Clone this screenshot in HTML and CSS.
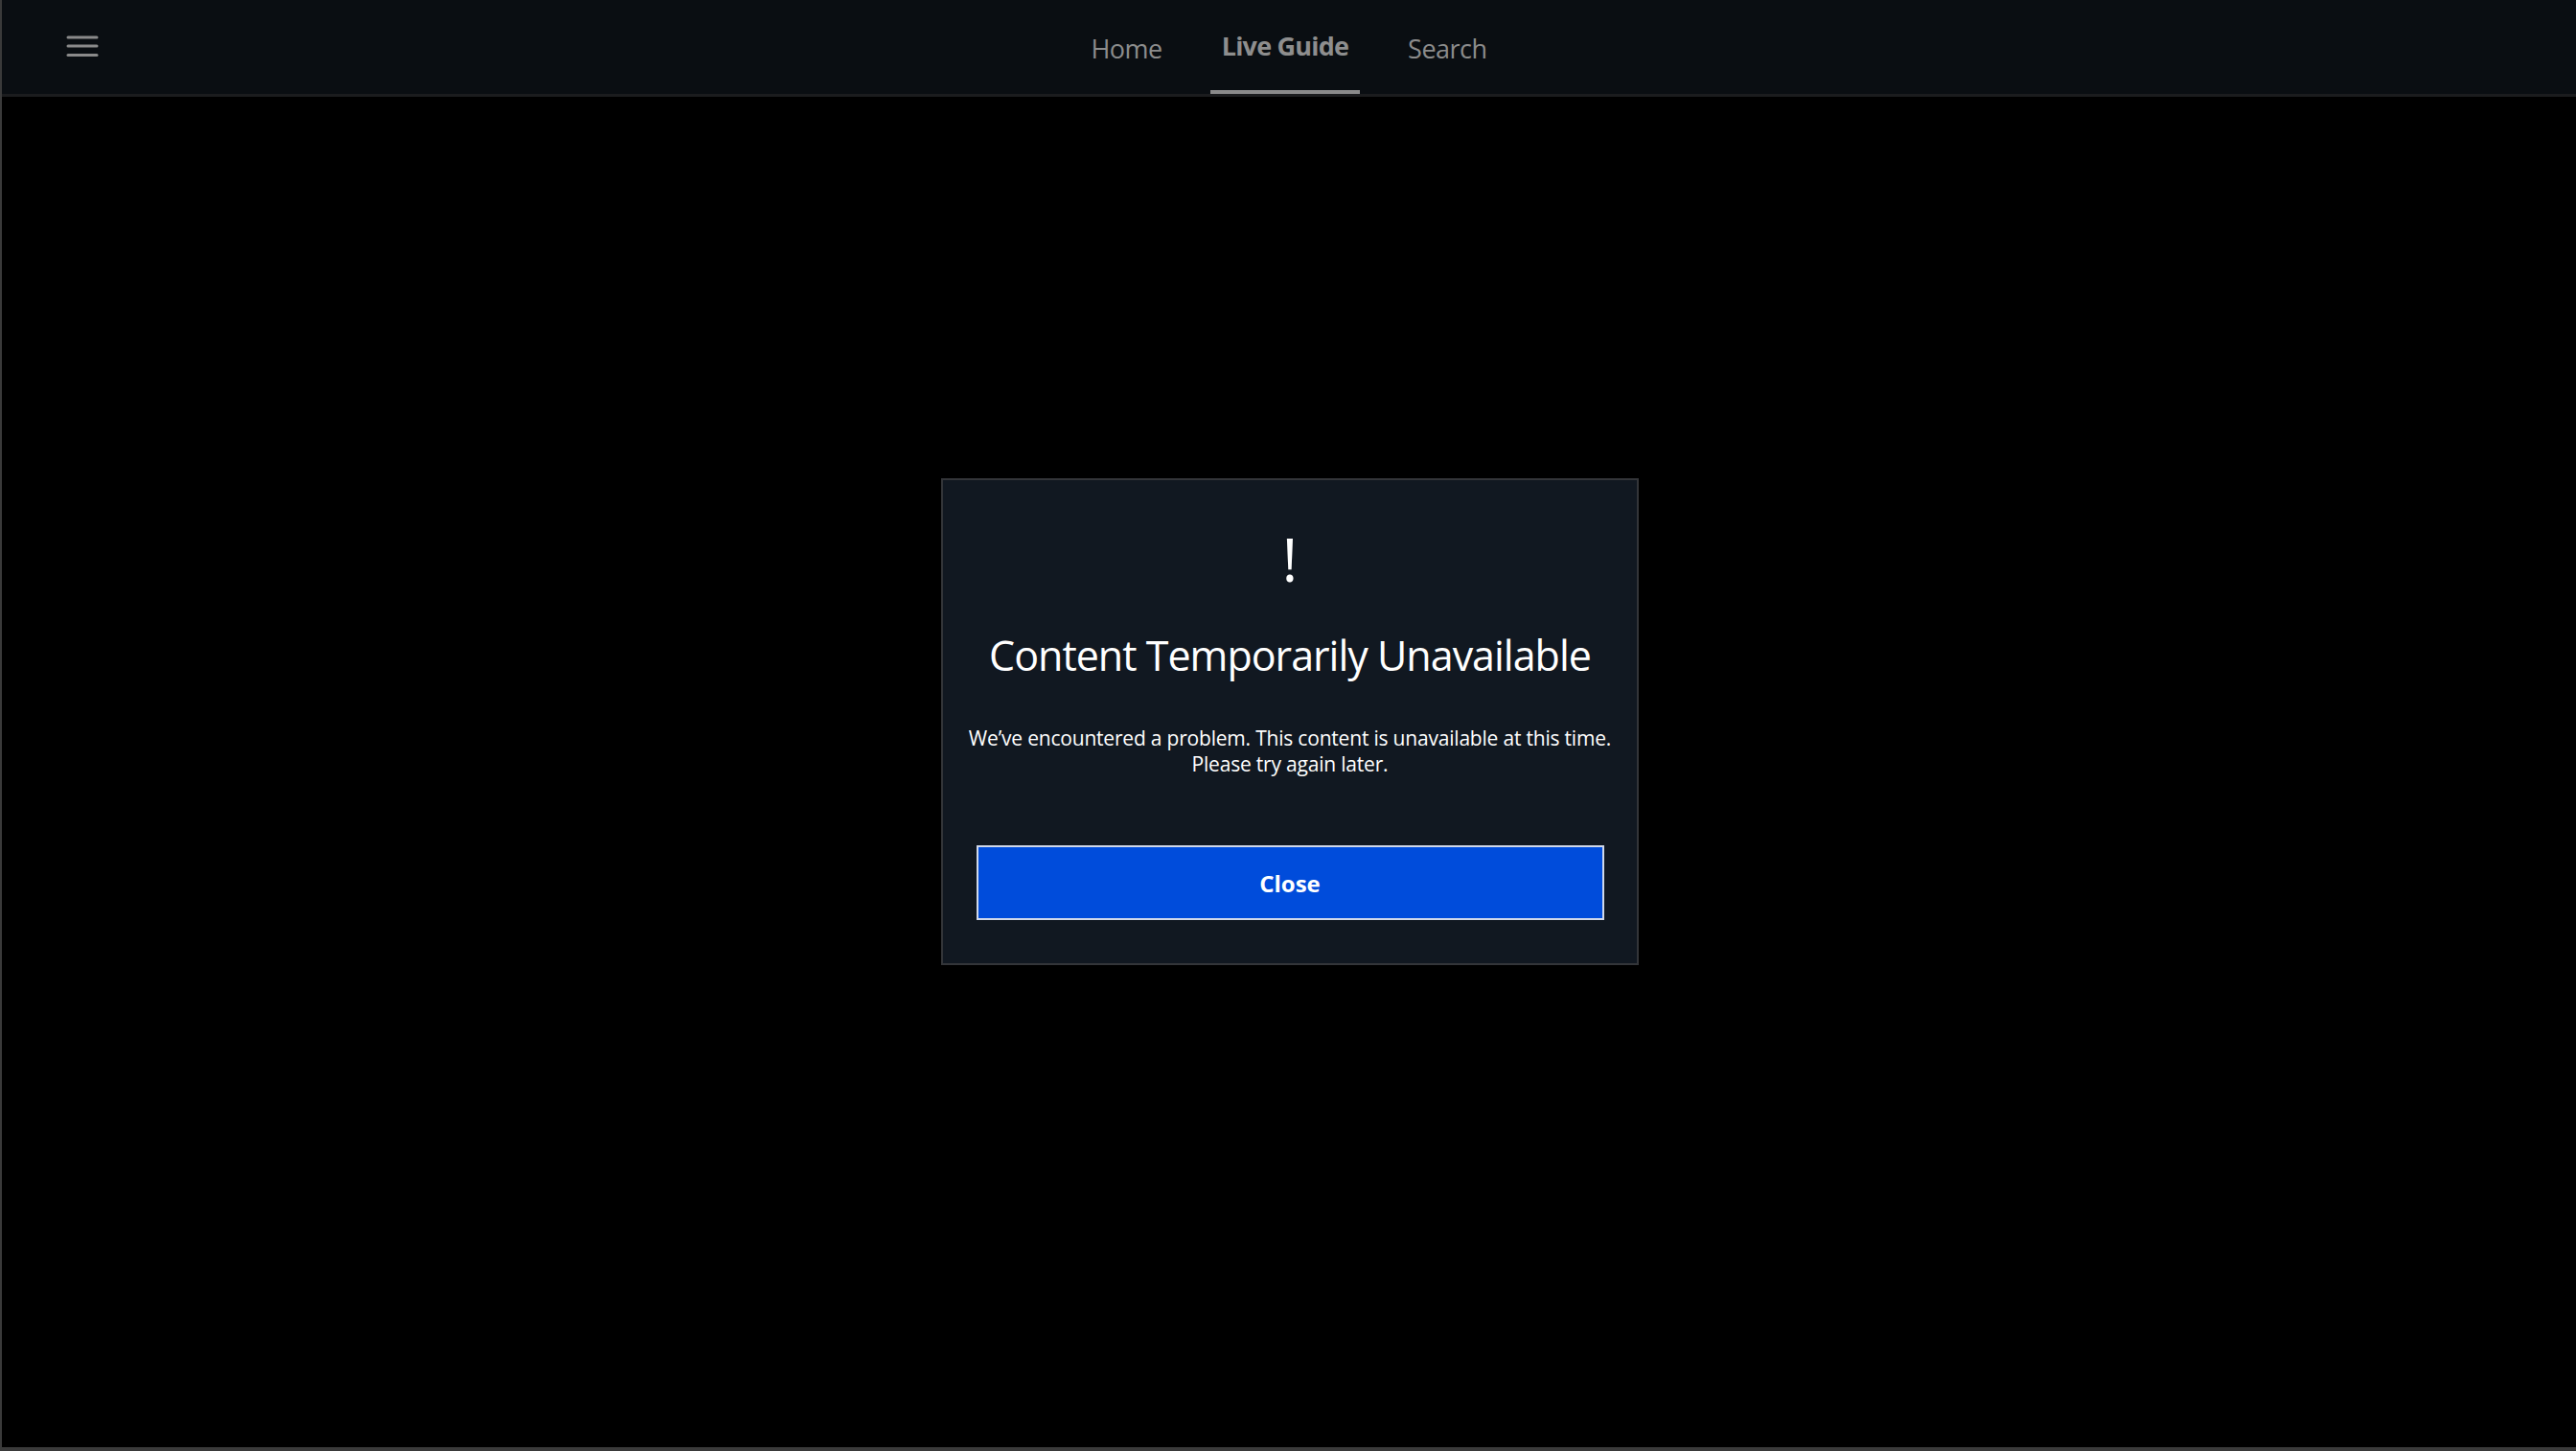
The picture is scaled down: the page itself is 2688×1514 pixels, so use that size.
FILE: index.html
```html
<!DOCTYPE html>
<html lang="en">
<head>
    <meta charset="UTF-8">
    <meta name="viewport" content="width=device-width, initial-scale=1.0">
    <title>Live Guide</title>
    <link rel="stylesheet" href="styles.css">
</head>
<body>
    <div class="app">
        <header class="top-bar">
            <button class="menu-btn" aria-label="Menu">
                <svg width="34" height="24" viewBox="0 0 34 24">
                    <line x1="2" y1="3" x2="32" y2="3"/>
                    <line x1="2" y1="12" x2="32" y2="12"/>
                    <line x1="2" y1="21.5" x2="32" y2="21.5"/>
                </svg>
            </button>
            <nav class="tabs">
                <a class="tab">Home</a>
                <a class="tab active">Live Guide</a>
                <a class="tab">Search</a>
            </nav>
        </header>
        <main class="content"></main>
    </div>

    <div class="overlay">
        <div class="dialog">
            <div class="dialog-icon">!</div>
            <h1 class="dialog-title">Content Temporarily Unavailable</h1>
            <p class="dialog-text">We’ve encountered a problem. This content is unavailable at this time.<br>Please try again later.</p>
            <button class="dialog-btn">Close</button>
        </div>
    </div>
</body>
</html>
```

FILE: styles.css
```css
html, body {
    margin: 0;
    height: 100%;
}
body {
    background-color: #000;
    font-family: "Open Sans", "Noto Sans", sans-serif;
    color: #fff;
}
.app {
    height: 100%;
    box-sizing: border-box;
    border-left: 2px solid #3a3a3a;
    border-bottom: 4px solid #3a3a3a;
    display: flex;
    flex-direction: column;
}
.top-bar {
    height: 98px;
    flex-shrink: 0;
    background-color: #0a0e12;
    border-bottom: 3px solid #1b1c1e;
    position: relative;
    display: flex;
    justify-content: center;
}
.menu-btn {
    position: absolute;
    left: 67px;
    top: 36px;
    background: none;
    border: none;
    padding: 0;
    cursor: pointer;
}
.menu-btn svg {
    display: block;
}
.menu-btn line {
    stroke: #8a8a8a;
    stroke-width: 3;
    stroke-linecap: round;
}
.tabs {
    display: flex;
    gap: 38px;
    height: 100%;
}
.tab {
    position: relative;
    display: flex;
    align-items: center;
    padding: 2px 12px 0;
    font-size: 27px;
    color: #8c8c8c;
    letter-spacing: -0.5px;
    cursor: pointer;
}
.tab.active {
    font-weight: 700;
    color: #8e8e8e;
    letter-spacing: -0.8px;
    padding: 0 12px 4px;
}
.tab.active::after {
    content: "";
    position: absolute;
    left: 0;
    right: 0;
    bottom: 0;
    height: 4px;
    background-color: #8a8a8a;
}
.content {
    flex: 1;
}
.overlay {
    position: fixed;
    inset: 0;
    display: flex;
    align-items: center;
    justify-content: center;
    padding: 0 0 8px 4px;
}
.dialog {
    width: 728px;
    box-sizing: border-box;
    background-color: #111821;
    border: 2px solid #333539;
    padding: 51px 20px 45px;
    display: flex;
    flex-direction: column;
    align-items: center;
    text-align: center;
}
.dialog-icon {
    font-size: 62px;
    line-height: 62px;
    height: 62px;
}
.dialog-title {
    margin: 42px 0 0;
    font-size: 43px;
    font-weight: 400;
    line-height: 56px;
    letter-spacing: -1px;
    white-space: nowrap;
}
.dialog-text {
    margin: 45px 0 0;
    font-size: 21px;
    line-height: 27px;
    letter-spacing: -0.2px;
    white-space: nowrap;
}
.dialog-btn {
    margin-top: 71px;
    width: 655px;
    height: 78px;
    flex-shrink: 0;
    background-color: #004cdb;
    border: 2px solid #d0d8ea;
    color: #fff;
    font-family: inherit;
    font-size: 24px;
    font-weight: 700;
    cursor: pointer;
}
```
